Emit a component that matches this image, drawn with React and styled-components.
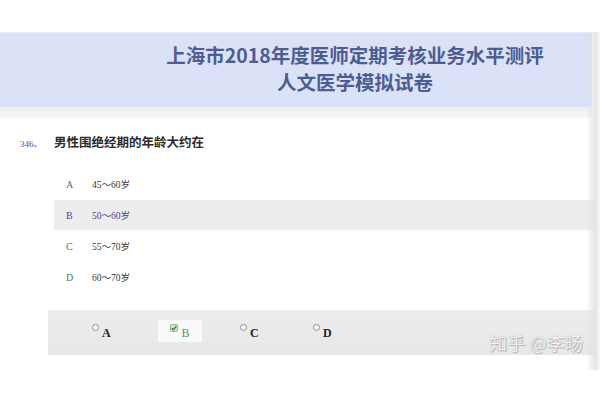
import React from "react";
import styled, { createGlobalStyle } from "styled-components";

const Global = createGlobalStyle`
  html, body { margin: 0; padding: 0; background: #fff; }
  body { width: 600px; height: 400px; overflow: hidden; }
`;

const Page = styled.div`
  position: relative;
  width: 600px;
  height: 400px;
  padding-top: 32px;
  box-sizing: border-box;
  background: #fff;
  &::after {
    content: "";
    position: absolute;
    top: 32px;
    right: 0;
    width: 14px;
    bottom: 30px;
    background: linear-gradient(to right, rgba(255,255,255,0), rgba(225,225,225,0.9) 70%, rgba(245,245,245,0.6));
  }
`;

const Header = styled.header`
  width: 592px;
  height: 75px;
  background: #dbe2f7;
  border-top: 1px solid #e6ebfb;
  box-sizing: border-box;
  padding-left: 118px;
  padding-bottom: 3px;
  display: flex;
  flex-direction: column;
  align-items: center;
  justify-content: center;
  gap: 1px;
  font-family: "Noto Sans CJK SC", "Noto Sans", sans-serif;
  font-weight: 700;
  font-size: 19.5px;
  line-height: 26px;
  color: #4d5c92;
`;

const Shade = styled.div`
  height: 11px;
  width: 592px;
  background: linear-gradient(#eeeeee, #f8f8f8);
`;

const Question = styled.div`
  display: flex;
  align-items: baseline;
  padding: 14px 0 0 20px;
  height: 36px;
  box-sizing: border-box;
  font-family: "Liberation Serif", "Noto Sans CJK SC", serif;
`;

const Num = styled.span`
  width: 34px;
  font-size: 9px;
  color: #5a4a9c;
`;

const QText = styled.span`
  font-size: 12.5px;
  font-weight: 700;
  color: #2a2a2a;
  font-family: "Noto Sans CJK SC", serif;
`;

const Options = styled.div`
  margin-top: 15px;
  display: flex;
  flex-direction: column;
  font-family: "Liberation Serif", "Noto Sans CJK SC", serif;
`;

const Option = styled.div`
  display: flex;
  align-items: center;
  height: 30px;
  margin-left: 54px;
  margin-right: 6px;
  margin-bottom: 1px;
  padding-left: 12px;
  background: ${(p) => (p.$active ? "#ededed" : "transparent")};
`;

const Letter = styled.span`
  width: 26px;
  font-size: 10px;
  color: ${(p) => (p.$active ? "#4a3c96" : "#3e7a52")};
`;

const OText = styled.span`
  font-size: 9.5px;
  color: ${(p) => (p.$active ? "#4a3c96" : "#333")};
`;

const Bar = styled.div`
  margin: 17px 5px 0 48px;
  height: 45px;
  background: linear-gradient(#ececec, #e8e8e8);
  display: flex;
  align-items: center;
  padding-left: 44px;
  padding-bottom: 3px;
  box-sizing: border-box;
  position: relative;
`;

const Choice = styled.div`
  display: flex;
  align-items: flex-start;
  gap: 3px;
  width: 44px;
  height: 22px;
  padding: 3px 0 0 0;
  box-sizing: border-box;
  margin-right: ${(p) => p.$mr}px;
  background: ${(p) => (p.$checked ? "#fafafa" : "transparent")};
  justify-content: ${(p) => (p.$checked ? "center" : "flex-start")};
`;

const Radio = styled.span`
  display: inline-block;
  width: 5px;
  height: 5px;
  border: 1.5px solid #8a8a8a;
  border-radius: 50%;
  background: #fff;
  margin-top: 1px;
`;

const ChoiceLetter = styled.span`
  font-family: "Liberation Serif", serif;
  font-weight: ${(p) => (p.$checked ? 400 : 700)};
  font-size: 12px;
  margin-top: 3px;
  color: ${(p) => (p.$checked ? "#4c9a5e" : "#222")};
`;

const Mark = styled.span`
  position: absolute;
  right: 12px;
  bottom: 0px;
  font-family: "Noto Sans CJK SC", sans-serif;
  font-size: 17.5px;
  color: #f4f4f4;
  text-shadow: 0 0 1px #9a9a9a, 1px 1px 1px #b0b0b0;
  letter-spacing: 0.5px;
`;

const Check = () => (
  <svg width="8" height="8" viewBox="0 0 8 8" style={{ marginTop: 1 }}>
    <rect x="0.5" y="0.5" width="7" height="7" rx="1" fill="#cfe6cf" stroke="#8ab48e" strokeWidth="1" />
    <path d="M1.8 4.2 L3.4 5.8 L6.4 2.2" fill="none" stroke="#2f7a3a" strokeWidth="1.3" />
  </svg>
);

const opts = [
  ["A", "45～60岁"],
  ["B", "50～60岁"],
  ["C", "55～70岁"],
  ["D", "60～70岁"],
];

const choices = [
  ["A", false, 22],
  ["B", true, 38],
  ["C", false, 29],
  ["D", false, 0],
];

export default function App() {
  return (
    <>
      <Global />
      <Page>
        <Header>
          <div>上海市2018年度医师定期考核业务水平测评</div>
          <div>人文医学模拟试卷</div>
        </Header>
        <Shade />
        <Question>
          <Num>346、</Num>
          <QText>男性围绝经期的年龄大约在</QText>
        </Question>
        <Options>
          {opts.map(([l, t]) => (
            <Option key={l} $active={l === "B"}>
              <Letter $active={l === "B"}>{l}</Letter>
              <OText $active={l === "B"}>{t}</OText>
            </Option>
          ))}
        </Options>
        <Bar>
          {choices.map(([l, c, mr]) => (
            <Choice key={l} $checked={c} $mr={mr}>
              {c ? <Check /> : <Radio />}
              <ChoiceLetter $checked={c}>{l}</ChoiceLetter>
            </Choice>
          ))}
          <Mark>知乎 @李旸</Mark>
        </Bar>
      </Page>
    </>
  );
}
